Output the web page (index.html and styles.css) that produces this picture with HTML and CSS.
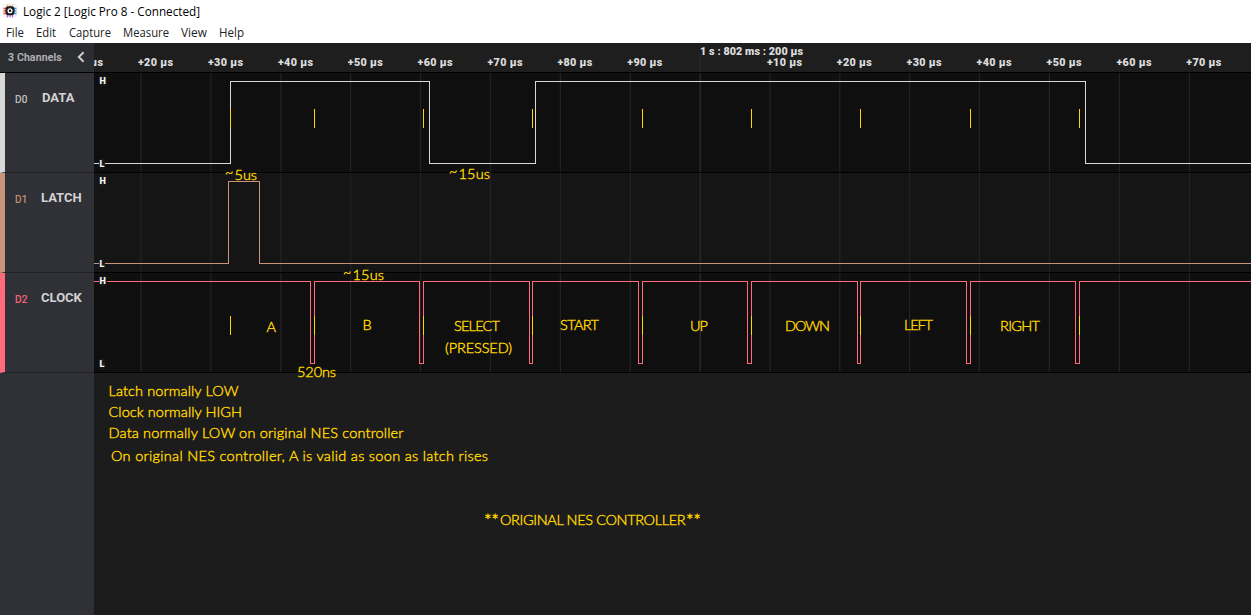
FILE: index.html
```
<!DOCTYPE html>
<html lang="en">
<head>
<meta charset="utf-8">
<title>Logic 2 [Logic Pro 8 - Connected]</title>
<link rel="stylesheet" href="styles.css">
</head>
<body>
<header class="titlebar">
  <svg class="app-icon" width="16" height="16" viewBox="0 0 16 16">
    <rect x="0.5" y="0.5" width="15" height="15" rx="4" fill="#f4f2f6"/>
    <path d="M5.5 1.5v3M8 1.5v3M10.5 1.5v3" stroke="#f5b878" stroke-width="1.2"/>
    <path d="M5.5 11v3.2M8 11v3.2M10.5 11v3.2" stroke="#b45bd8" stroke-width="1.2"/>
    <path d="M1.5 5.5h3M1.5 8h3M1.5 10.5h3" stroke="#f0503c" stroke-width="1.3"/>
    <path d="M11.5 5.5h3M11.5 8h3M11.5 10.5h3" stroke="#3ca0f0" stroke-width="1.3"/>
    <rect x="3.5" y="3.2" width="9" height="9" rx="3" fill="#1c1c20"/>
    <circle cx="8" cy="7.7" r="1.9" fill="#1c1c20" stroke="#fff" stroke-width="1.3"/>
  </svg>
  <svg class="title-text" width="190" height="22"><text x="0" y="16" textLength="177" lengthAdjust="spacingAndGlyphs">Logic 2 [Logic Pro 8 - Connected]</text></svg>
</header>
<nav class="menu">
  <svg width="260" height="20">
    <text x="6" y="14" textLength="18" lengthAdjust="spacingAndGlyphs">File</text>
    <text x="36" y="14" textLength="20" lengthAdjust="spacingAndGlyphs">Edit</text>
    <text x="69" y="14" textLength="42" lengthAdjust="spacingAndGlyphs">Capture</text>
    <text x="123" y="14" textLength="46" lengthAdjust="spacingAndGlyphs">Measure</text>
    <text x="181" y="14" textLength="26" lengthAdjust="spacingAndGlyphs">View</text>
    <text x="219" y="14" textLength="25" lengthAdjust="spacingAndGlyphs">Help</text>
  </svg>
</nav>
<main class="workspace">
  <aside class="channels">
    <div class="channels-head">
      <span>3 Channels</span>
      <svg width="8" height="12" viewBox="0 0 8 12"><path d="M6.6 1.3 1.8 6l4.8 4.7" fill="none" stroke="#d0d0d2" stroke-width="1.9"/></svg>
    </div>
    <div class="channel d0"><span class="id">D0</span><span class="name">DATA</span></div>
    <div class="channel d1"><span class="id">D1</span><span class="name">LATCH</span></div>
    <div class="channel d2"><span class="id">D2</span><span class="name">CLOCK</span></div>
  </aside>
  <svg class="plot" width="1157" height="572" viewBox="94 43 1157 572">
    <rect x="94" y="43" width="1157" height="29" fill="#1e1e1e"/>
    <rect x="94" y="73" width="1157" height="99" fill="#0f0f0f"/>
    <rect x="94" y="173" width="1157" height="99" fill="#151515"/>
    <rect x="94" y="273" width="1157" height="99" fill="#0f0f0f"/>
    <path class="grid" d="M141 69V372M210.9 69V372M280.8 69V372M350.7 69V372M420.5 69V372M490.4 69V372M560.4 69V372M630.3 69V372M770.1 69V372M839.8 69V372M909.6 69V372M979.4 69V372M1049.4 69V372M1119.4 69V372M1189.4 69V372"/>
    <path class="grid major" d="M700.2 57V372"/>
    <path class="rule" d="M94 72.5H1251M94 172.5H1251M94 272.5H1251M94 372.5H1251"/>
    <g class="ruler">
      <text x="68" y="66.3" textLength="35">+10 µs</text>
      <text x="138" y="66.3" textLength="35">+20 µs</text>
      <text x="208" y="66.3" textLength="35">+30 µs</text>
      <text x="278" y="66.3" textLength="35">+40 µs</text>
      <text x="347.8" y="66.3" textLength="35">+50 µs</text>
      <text x="417.6" y="66.3" textLength="35">+60 µs</text>
      <text x="487.5" y="66.3" textLength="35">+70 µs</text>
      <text x="557.4" y="66.3" textLength="35">+80 µs</text>
      <text x="627.3" y="66.3" textLength="35">+90 µs</text>
      <text x="700" y="54.6" textLength="103">1 s : 802 ms : 200 µs</text>
      <text x="767" y="66.3" textLength="35">+10 µs</text>
      <text x="836.8" y="66.3" textLength="35">+20 µs</text>
      <text x="906.6" y="66.3" textLength="35">+30 µs</text>
      <text x="976.6" y="66.3" textLength="35">+40 µs</text>
      <text x="1046.6" y="66.3" textLength="35">+50 µs</text>
      <text x="1116.5" y="66.3" textLength="35">+60 µs</text>
      <text x="1186.3" y="66.3" textLength="35">+70 µs</text>
    </g>
    <path class="wave" stroke="#d8d8d8" d="M94 163.5H230.5V81.5H429.5V163.5H535.5V81.5H1085.5V163.5H1251"/>
    <path class="wave" stroke="#c8957a" d="M94 263.5H228.5V181.5H259.5V263.5H1251"/>
    <path class="wave" stroke="#ff6b7d" d="M94 281.5H310.5V363.5H314.5V281.5H419.5V363.5H423.5V281.5H529.5V363.5H532.5V281.5H638.5V363.5H642.5V281.5H747.5V363.5H751.5V281.5H857.5V363.5H860.5V281.5H966.5V363.5H970.5V281.5H1075.5V363.5H1079.5V281.5H1251"/>
    <g fill="#191919">
      <rect x="99" y="76" width="8" height="10" rx="2"/><rect x="99" y="159" width="6" height="10" rx="2"/>
      <rect x="99" y="176" width="8" height="10" rx="2"/><rect x="99" y="259" width="6" height="10" rx="2"/>
      <rect x="99" y="276" width="8" height="10" rx="2"/><rect x="99" y="359" width="6" height="10" rx="2"/>
    </g>
    <g class="level">
      <text x="99.6" y="84.4">H</text><text x="99.6" y="167.4">L</text>
      <text x="99.6" y="184.4">H</text><text x="99.6" y="267.4">L</text>
      <text x="99.6" y="284.4">H</text><text x="99.6" y="367.4">L</text>
    </g>
    <path class="tick" d="M230.5 109v19M314.5 109v19M423.5 109v19M532.5 109v19M642.5 109v19M751.5 109v19M860.5 109v19M970.5 109v19M1079.5 109v19M230.5 316v19M314.5 316v19M423.5 316v19M532.5 316v19M642.5 316v19M751.5 316v19M860.5 316v19M970.5 316v19M1079.5 316v19"/>
    <g class="note">
      <text x="225" y="177">~</text><text x="234.5" y="180" textLength="22.5">5us</text>
      <text x="449" y="176">~</text><text x="458.5" y="179" textLength="31.5">15us</text>
      <text x="343" y="277">~</text><text x="352.5" y="280" textLength="31.5">15us</text>
      <text x="297" y="377" textLength="39">520ns</text>
      <text x="266.5" y="332">A</text>
      <text x="362.5" y="330">B</text>
      <text x="454" y="331" textLength="46">SELECT</text>
      <text x="445" y="353" textLength="67">(PRESSED)</text>
      <text x="560" y="330" textLength="39">START</text>
      <text x="690" y="331" textLength="18">UP</text>
      <text x="785" y="331" textLength="45">DOWN</text>
      <text x="904" y="330" textLength="29">LEFT</text>
      <text x="1000" y="331" textLength="40">RIGHT</text>
      <text x="108.5" y="396" textLength="130">Latch normally LOW</text>
      <text x="108.5" y="417" textLength="133.5">Clock normally HIGH</text>
      <text x="108.5" y="438" textLength="295">Data normally LOW on original NES controller</text>
      <text x="111" y="461" textLength="377">On original NES controller, A is valid as soon as latch rises</text>
      <text class="stars" x="484" y="527" textLength="15">**</text><text x="500" y="525" textLength="185.5">ORIGINAL NES CONTROLLER</text><text class="stars" x="686" y="527" textLength="15">**</text>
    </g>
  </svg>
</main>
</body>
</html>
```
FILE: styles.css
```
body { margin: 0; width: 1251px; height: 615px; overflow: hidden; background: #fff; font-family: Roboto, sans-serif; }
svg { display: block; }
.titlebar { display: flex; height: 23px; padding-left: 2px; }
.app-icon { margin-top: 3px; }
.title-text { margin-left: 5px; font: 12px "Open Sans", sans-serif; fill: #000; }
.menu { height: 20px; font: 12px "Open Sans", sans-serif; fill: #222; }
.workspace { display: flex; height: 572px; background: #1c1c1c; }
.channels { width: 94px; background: #303136; color: #d2d2d4; }
.channels-head { display: flex; box-sizing: border-box; height: 30px; padding: 0 9px 1px 8px; align-items: center; justify-content: space-between; background: #2c2d31; border-bottom: 1px solid #000; font-size: 10.5px; font-weight: 500; letter-spacing: .15px; color: #b4b4b7; -webkit-text-stroke: .2px #b4b4b7; }
.channel { display: flex; box-sizing: border-box; height: 100px; padding: 17px 0 0 10px; border-left: 5px solid; border-bottom: 1px solid #222226; line-height: 16px; }
.id { width: 26px; padding-top: 2px; font-size: 10px; letter-spacing: .2px; -webkit-text-stroke: .2px currentColor; }
.name { font-size: 13px; font-weight: 700; color: #d2d2d4; }
.d0 { border-left-color: #d8d8d8; }
.d1 { border-left-color: #c8957a; }
.d2 { border-left-color: #ff6b7d; }
.d0 .id { color: #c8c8c8; }
.d0 .name { padding-left: 1px; }
.d1 .id { color: #c8957a; }
.d2 .id { color: #ff6b7d; }
.grid { stroke: #222; stroke-width: 1.3; }
.major { stroke: #2b2b2b; }
.rule { stroke: #000; }
.wave { fill: none; shape-rendering: crispEdges; }
.tick { stroke: #ffd700; shape-rendering: crispEdges; }
.ruler { font: 900 10.8px Roboto, sans-serif; fill: #dcdcdc; }
.level { font: 900 9px Roboto, sans-serif; fill: #f4f4f4; }
.note { font: 300 14.5px Lato, sans-serif; fill: #ffd700; stroke: #ffd700; stroke-width: .4px; }
.stars { font-size: 18px; }
```
